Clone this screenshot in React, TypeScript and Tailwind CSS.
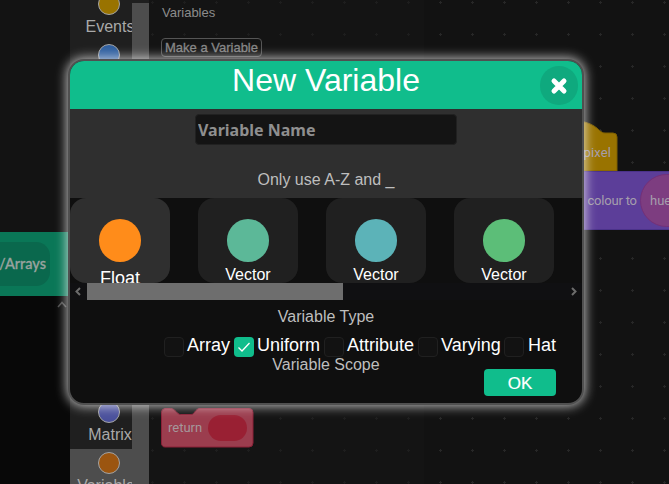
import React from 'react';

const categories = [
  { name: 'Events', color: '#997300' },
  { name: 'Looks', color: '#2f5f9f' },
  { name: '', color: '#333' },
  { name: '', color: '#333' },
  { name: '', color: '#333' },
  { name: '', color: '#333' },
  { name: '', color: '#333' },
  { name: '', color: '#333' },
  { name: 'Matrix', color: '#4a509b' },
  { name: 'Variables', color: '#9b5510', active: true },
];

const types = [
  { name: 'Float', color: '#ff8c1a', active: true },
  { name: 'Vector', color: '#5cb898' },
  { name: 'Vector', color: '#5cb3b8' },
  { name: 'Vector', color: '#5cbe78' },
];

const scopes = [
  { name: 'Array', cell: 'w-[70px]', gap: 'gap-[3px]' },
  { name: 'Uniform', cell: 'w-[90px]', gap: 'gap-[3px]', checked: true },
  { name: 'Attribute', cell: 'w-[94px]', gap: 'gap-[3px]' },
  { name: 'Varying', cell: 'w-[86px]', gap: 'gap-[3px]' },
  { name: 'Hat', cell: 'w-[56px]', gap: 'gap-1' },
];

function CrossGrid({ color }: { color: string }) {
  const id = 'grid' + color.slice(1);
  return (
    <svg className="absolute inset-0 h-full w-full">
      <defs>
        <pattern id={id} width="32" height="32" patternUnits="userSpaceOnUse">
          <path d="M2 2.5h3M3.5 1v3" stroke={color} />
        </pattern>
      </defs>
      <rect width="100%" height="100%" fill={`url(#${id})`} />
    </svg>
  );
}

function LeftPanel() {
  return (
    <div className="flex h-full w-[70px] shrink-0 flex-col bg-[#080808]">
      <div className="h-[232px] bg-[#131313]" />
      <div className="flex h-16 items-center bg-[#0a7757]">
        <div className="flex h-11 w-[50px] items-center justify-end rounded-r-[14px] bg-[#0a684d] pr-1 font-['Lato',sans-serif] text-[14.5px] font-medium text-[#99a39f] [-webkit-text-stroke:0.3px_#99a39f]">
          /Arrays
        </div>
      </div>
      <svg className="mt-[5px] ml-[57px] h-[7px] w-[10px]" viewBox="0 0 10 7" fill="none">
        <path d="M1 6 5 1.5 9 6" stroke="#4c4c4c" strokeWidth="1.5" />
      </svg>
    </div>
  );
}

function Palette() {
  return (
    <div className="flex h-full w-[79px] shrink-0 overflow-hidden bg-[#1f1f1f]">
      <div className="-mt-[10px] w-[62px] overflow-hidden">
        {categories.map((c, i) => (
          <div
            key={i}
            className={`flex h-[51px] w-20 flex-col items-center pt-[3px] ${c.active ? 'bg-[#4d4d4d]' : ''}`}
          >
            <div className="mr-[2px] size-[22px] shrink-0 rounded-full border border-[#a3a3a3]" style={{ backgroundColor: c.color }} />
            <div className="mt-[2px] text-[16px] leading-5 text-[#a9a9a9]">{c.name}</div>
          </div>
        ))}
      </div>
      <div className="mt-[3px] w-[17px] bg-[#4d4d4d]" />
    </div>
  );
}

function Flyout() {
  return (
    <div className="relative h-full w-[275px] shrink-0 bg-[#141414]">
      <CrossGrid color="#1e1e1e" />
      <div className="relative flex flex-col items-start pl-3">
        <div className="mt-1 ml-[1px] text-[13px] leading-[18px] text-[#8c8c8c]">Variables</div>
        <div className="mt-4 flex h-[19px] w-[101px] items-center justify-center rounded-[4px] border-[1.5px] border-[#555] text-[13px] whitespace-nowrap text-[#858585] [-webkit-text-stroke:0.3px_#858585]">
          Make a Variable
        </div>
        <div className="relative mt-[351px] h-10 w-[93px]">
          <svg className="absolute inset-0" width="93" height="40" viewBox="0 0 93 40">
            <path
              d="M4 .5H9.500C12 .5 13.500 2 15 3.500L17 5.500Q18 6.500 19.500 6.500H30Q31.500 6.500 32.500 5.500L35 2.500C36.500 1 37.500 .5 39 .5H88a4 4 0 0 1 4 4V35a4 4 0 0 1-4 4H4a3.500 3.500 0 0 1-3.500-4V4.500a4 4 0 0 1 3.500-4Z"
              fill="#9b3d4e"
              stroke="#8a2037"
            />
          </svg>
          <div className="relative flex h-[39px] items-center gap-[6px] pl-[7px] font-['Roboto',sans-serif] text-[13px] text-[#a5979b]">
            <span className="w-[34px]">return</span>
            <div className="h-[26px] w-[39px] rounded-full bg-[#992033]" />
          </div>
        </div>
      </div>
    </div>
  );
}

function Workspace() {
  return (
    <div className="relative h-full flex-1 overflow-hidden bg-[#121212]">
      <div className="absolute -left-[19px] top-0 h-full w-[280px]">
        <CrossGrid color="#272727" />
      </div>
      <svg className="absolute top-0 left-0" width="245" height="484" viewBox="424 0 245 484">
        <path d="M530 171V133C545 117 580 117 594 126C599 129 601 133 605 133H613a4 4 0 0 1 4 4V171Z" fill="#997300" stroke="#7d5e00" />
        <rect x="530" y="171.500" width="160" height="58" fill="#5c3e99" stroke="#4b328a" />
        <rect x="640.500" y="174.500" width="80" height="52" rx="26" fill="#7d3d80" stroke="#743078" />
        <g fontFamily="Roboto, sans-serif" fill="#a59eac">
          <text x="583.500" y="157" textLength="27.500" fontSize="13">pixel</text>
          <text x="587.500" y="205" textLength="49.500" fontSize="13">colour to</text>
          <text x="650" y="205" fontSize="13">hue</text>
        </g>
      </svg>
    </div>
  );
}

function Dialog() {
  return (
    <div className="absolute top-[59px] left-[68px] flex h-[346px] w-[516px] flex-col overflow-hidden rounded-[16px] border-2 border-[#505050] bg-[#0f0f0f] shadow-[0_0_12px_1px_rgba(255,255,255,0.75)]">
      <div className="relative flex h-12 shrink-0 justify-center bg-[#10bd8c] text-[32px] leading-[38px] text-white">
        New Variable
        <button className="absolute top-[5px] right-1 flex h-[39px] w-[38px] items-center justify-center rounded-full bg-[#0fa97e]">
          <svg width="18" height="18" viewBox="0 0 18 18">
            <path d="M4 4 14 14M14 4 4 14" stroke="white" strokeWidth="5" strokeLinecap="round" />
          </svg>
        </button>
      </div>
      <div className="flex h-[89px] shrink-0 flex-col items-center bg-[#2f2f2f] pt-[5px]">
        <input
          placeholder="Variable Name"
          className="h-[31px] w-[262px] rounded-[4px] border border-[#212121] bg-[#141414] px-[2px] font-['Noto_Sans',sans-serif] text-[16px] font-bold placeholder:text-[#8f8f8f]"
        />
        <div className="mt-[25px] text-[16px] leading-5 text-[#bebebe]">Only use A-Z and _</div>
      </div>
      <div className="flex h-[85px] shrink-0 gap-7">
        {types.map((t, i) => (
          <div
            key={i}
            className={`flex h-[85px] w-[100px] shrink-0 flex-col items-center overflow-hidden rounded-[16px] pt-[21px] text-white ${
              t.active ? 'bg-[#2f2f2f]' : 'bg-[#202020]'
            }`}
          >
            <div className="h-[43px] w-[42px] shrink-0 rounded-full" style={{ backgroundColor: t.color }} />
            <div className={t.active ? 'mt-[6px] text-[18px] leading-5' : 'mt-[3px] text-[16px] leading-5'}>{t.name}</div>
          </div>
        ))}
      </div>
      <div className="flex h-[17px] shrink-0 items-center bg-[#101012]">
        <svg width="17" height="17" viewBox="0 0 17 17" fill="none">
          <path d="M10 5 6.500 8.500 10 12" stroke="#6c6c6c" strokeWidth="2" />
        </svg>
        <div className="h-full w-64 bg-[#6e6e6e]" />
        <svg className="ml-auto" width="17" height="17" viewBox="0 0 17 17" fill="none">
          <path d="M7 5 10.500 8.500 7 12" stroke="#6c6c6c" strokeWidth="2" />
        </svg>
      </div>
      <div className="mt-[7px] text-center text-[16px] leading-5 text-[#bebebe]">Variable Type</div>
      <div className="mt-[10px] ml-[94px] flex h-5">
        {scopes.map((s) => (
          <label key={s.name} className={`flex shrink-0 ${s.cell} ${s.gap}`}>
            <span
              className={`flex size-5 shrink-0 items-center justify-center rounded-[4px] ${
                s.checked ? 'bg-[#10bd8c]' : 'border-[1.500px] border-[#202020] bg-[#121212]'
              }`}
            >
              {s.checked && (
                <svg width="20" height="20" viewBox="0 0 20 20" fill="none">
                  <path d="M4.500 10.500 8 14 15.500 6" stroke="white" strokeWidth="1.300" />
                </svg>
              )}
            </span>
            <span className="text-[18px] leading-[17px] text-white">{s.name}</span>
          </label>
        ))}
      </div>
      <div className="-mt-[2px] text-center text-[16px] leading-5 text-[#bebebe]">Variable Scope</div>
      <button className="-mt-[6px] mr-[26px] flex h-[27px] w-[72px] shrink-0 items-center justify-center self-end rounded-[4px] bg-[#10bd8c] pt-[2px] text-[17px] text-white">
        <span className="[-webkit-text-stroke:0.2px_white]">OK</span>
      </button>
    </div>
  );
}

export default function App() {
  return (
    <div className="relative flex h-[484px] w-[669px] overflow-hidden bg-[#121212] font-['Liberation_Sans',Arial,sans-serif]">
      <LeftPanel />
      <Palette />
      <Flyout />
      <Workspace />
      <Dialog />
    </div>
  );
}
